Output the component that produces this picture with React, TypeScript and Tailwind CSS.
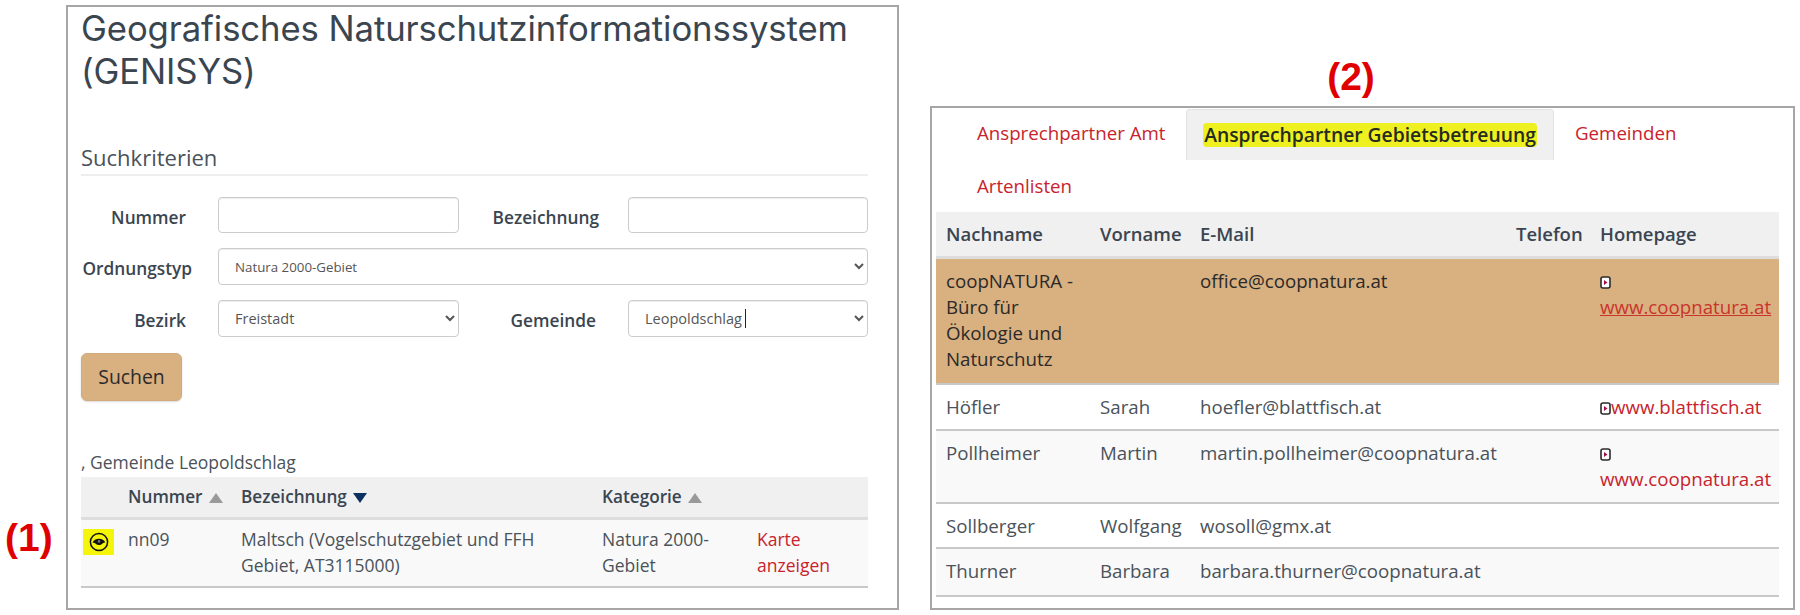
const FONT = "font-['Open_Sans',sans-serif]";

const CONTACTS = [
  { last: 'Höfler', first: 'Sarah', mail: 'hoefler@blattfisch.at', web: 'www.blattfisch.at', row: 'h-[46px] bg-white', inline: true },
  { last: 'Pollheimer', first: 'Martin', mail: 'martin.pollheimer@coopnatura.at', web: 'www.coopnatura.at', row: 'h-[73px] bg-[#f9f9f9]', inline: false },
  { last: 'Sollberger', first: 'Wolfgang', mail: 'wosoll@gmx.at', web: '', row: 'h-[45px] bg-white', inline: false },
  { last: 'Thurner', first: 'Barbara', mail: 'barbara.thurner@coopnatura.at', web: '', row: 'h-[48px] bg-[#f9f9f9]', inline: false },
];

function LinkIcon() {
  return (
    <svg width="11" height="13" viewBox="0 0 11 13" className="inline-block align-[-1px]">
      <rect x="1" y="1" width="9" height="11" rx="2" fill="#fff" stroke="#2b2b2b" strokeWidth="1.6" />
      <path d="M4 4 L7.5 6.5 L4 9 Z" fill="#a3104f" />
    </svg>
  );
}

function EyeIcon() {
  return (
    <svg width="20" height="20" viewBox="0 0 20 20">
      <circle cx="10" cy="10" r="8.6" fill="none" stroke="#111" strokeWidth="1.5" />
      <path d="M3.6 10.8 C5 5.6 14.4 5.2 16.4 10.6 C14 9.8 13.4 13 10 13 C7 13 6.2 10 3.6 10.8 Z" fill="#111" />
      <circle cx="10" cy="9.4" r="1.3" fill="#777" />
    </svg>
  );
}

function SortUp() {
  return <span className="ml-1.5 inline-block h-0 w-0 border-x-[7px] border-b-[10px] border-x-transparent border-b-[#999]" />;
}

function FormLabel({ children, className }: { children: string; className: string }) {
  return <label className={`shrink-0 pt-[5px] text-right text-[17.3px] font-semibold text-[#3a4550] ${className}`}>{children}</label>;
}

function Box({ className = '', value }: { className?: string; value: string }) {
  return (
    <select
      defaultValue={value}
      className={`h-[37px] rounded border border-[#ccc] bg-white pl-[12px] text-[#555] shadow-[inset_0_1px_1px_rgba(0,0,0,0.075)] ${className}`}
    >
      <option>{value}</option>
    </select>
  );
}

export default function App() {
  return (
    <div className={`flex h-[615px] w-[1800px] overflow-hidden bg-white text-[#4a525a] ${FONT}`}>
      <div className="w-[66px] shrink-0 pl-[5px] pt-[511px] font-['Liberation_Sans',sans-serif] text-[39px] font-bold leading-[54px] text-[#e00000]">
        (1)
      </div>

      <section className="mt-[5px] box-border h-[605px] w-[833px] shrink-0 border-2 border-[#a6a6a6] pl-[13px] pr-[29px]">
        <h1 className="font-['Inter',sans-serif] text-[34.7px] leading-[43px] font-normal tracking-[-0.1px] whitespace-nowrap text-[#3a4550]">
          Geografisches Naturschutzinformationssystem
          <br />
          (GENISYS)
        </h1>
        <h2 className="mt-[50px] border-b-2 border-[#eeeeee] pb-[3px] text-[22px] leading-[28px] text-[#4a525a]">Suchkriterien</h2>

        <form className="mt-[21px]">
          <div className="flex h-[36px] items-center">
            <FormLabel className="w-[137px] pr-[32px]">Nummer</FormLabel>
            <input className="box-border h-[36px] w-[241px] rounded border border-[#ccc] shadow-[inset_0_1px_1px_rgba(0,0,0,0.075)]" />
            <FormLabel className="w-[169px] pr-[29px]">Bezeichnung</FormLabel>
            <input className="box-border h-[36px] w-[240px] rounded border border-[#ccc] shadow-[inset_0_1px_1px_rgba(0,0,0,0.075)]" />
          </div>
          <div className="mt-[15px] flex items-center">
            <FormLabel className="w-[137px] pr-[26px]">Ordnungstyp</FormLabel>
            <Box className="w-[650px] text-[13.3px]" value="Natura 2000-Gebiet" />
          </div>
          <div className="mt-[15px] flex items-center">
            <FormLabel className="w-[137px] pr-[32px]">Bezirk</FormLabel>
            <Box className="w-[241px] text-[14.5px]" value="Freistadt" />
            <FormLabel className="w-[169px] pr-[32px]">Gemeinde</FormLabel>
            <div className="relative">
              <Box className="w-[240px] text-[14.5px]" value="Leopoldschlag" />
              <span className="absolute left-[117px] top-[9px] h-[19px] w-px bg-[#222]" />
            </div>
          </div>
          <button type="button" className="mt-[16px] block h-[48px] w-[101px] rounded-md border border-[#d3ab7b] bg-[#d9b07f] text-[19.4px] text-[#2b2b2b] shadow-[0_1px_2px_rgba(0,0,0,0.15)]">
            Suchen
          </button>
        </form>

        <p className="mt-[48px] text-[17.5px] leading-[26px]">, Gemeinde Leopoldschlag</p>

        <table className="mt-[2px] w-[787px] table-fixed border-collapse text-[17.5px] leading-[26px]">
          <colgroup>
            <col className="w-[37px]" />
            <col className="w-[113px]" />
            <col className="w-[361px]" />
            <col className="w-[155px]" />
            <col className="w-[121px]" />
          </colgroup>
          <thead>
            <tr className="h-[41px] border-b-[3px] border-[#dddddd] bg-[#f0f0f0] text-left text-[#3a4550]">
              <th />
              <th className="pl-[10px] text-[17.2px] font-semibold whitespace-nowrap">Nummer<SortUp /></th>
              <th className="pl-[10px] text-[17.2px] font-semibold whitespace-nowrap">
                Bezeichnung
                <span className="ml-1.5 inline-block h-0 w-0 border-x-[7px] border-t-[10px] border-x-transparent border-t-[#0b3160]" />
              </th>
              <th className="pl-[10px] text-[17.2px] font-semibold whitespace-nowrap">Kategorie<SortUp /></th>
              <th />
            </tr>
          </thead>
          <tbody>
            <tr className="border-b-2 border-[#c8c8c8] bg-[#f9f9f9] align-top">
              <td className="pl-[2px] pt-[9px]">
                <span className="flex h-[26px] w-[31px] items-center justify-center bg-[#f5f50a]"><EyeIcon /></span>
              </td>
              <td className="pl-[10px] pt-[6px]">nn09</td>
              <td className="px-[10px] pb-[8px] pt-[6px]">Maltsch (Vogelschutzgebiet und FFH Gebiet, AT3115000)</td>
              <td className="px-[10px] pt-[6px]">Natura 2000-Gebiet</td>
              <td className="px-[10px] pt-[6px] text-[#c8232c]">Karte anzeigen</td>
            </tr>
          </tbody>
        </table>
      </section>

      <div className="ml-[31px] w-[865px] shrink-0">
        <div className="pr-[23px] pt-[52px] text-center font-['Liberation_Sans',sans-serif] text-[39px] font-bold leading-[49px] text-[#e00000]">(2)</div>
        <section className="mt-[5px] box-border h-[504px] border-2 border-[#a6a6a6] pl-[4px] pr-[14px]">
          <nav className="flex flex-wrap pl-[21px] pt-[1px] text-[18.7px] leading-[26px] text-[#c8232c]">
            <a className="flex h-[51px] w-[229px] items-center pb-[3px] pl-[20px]">Ansprechpartner Amt</a>
            <a className="flex h-[51px] w-[368px] items-center justify-center rounded-t border border-b-0 border-[#e4e4e4] bg-[#f0f0f0] pb-[1px] font-semibold text-[#3a4550]">
              <span className="rounded-sm bg-[#eef01f] px-[1px] text-[19.3px] leading-[24px] whitespace-nowrap text-[#262b20]">Ansprechpartner Gebietsbetreuung</span>
            </a>
            <a className="flex h-[51px] items-center pb-[3px] pl-[21px]">Gemeinden</a>
            <a className="flex h-[52px] w-full items-center pl-[20px]">Artenlisten</a>
          </nav>

          <table className="w-[843px] table-fixed border-collapse text-[18.7px] leading-[26px]">
            <colgroup>
              <col className="w-[154px]" />
              <col className="w-[100px]" />
              <col className="w-[316px]" />
              <col className="w-[84px]" />
              <col className="w-[189px]" />
            </colgroup>
            <thead>
              <tr className="h-[45px] border-b-[3px] border-[#dddddd] bg-[#f0f0f0] text-left text-[#3a4550]">
                {['Nachname', 'Vorname', 'E-Mail', 'Telefon', 'Homepage'].map((h) => (
                  <th key={h} className="pl-[10px] text-[18.5px] font-semibold whitespace-nowrap">{h}</th>
                ))}
              </tr>
            </thead>
            <tbody>
              <tr className="border-b-2 border-[#c8c8c8] bg-[#d9b07f] align-top text-[#2a2a2a]">
                <td className="px-[10px] pb-[11px] pt-[9px]">coopNATURA - Büro für Ökologie und Naturschutz</td>
                <td />
                <td className="px-[10px] pt-[9px]">office@coopnatura.at</td>
                <td />
                <td className="pl-[10px] pt-[9px]">
                  <LinkIcon />
                  <a className="block text-[#c9352c] underline">www.coopnatura.at</a>
                </td>
              </tr>
              {CONTACTS.map((c) => (
                <tr key={c.last} className={`border-b-2 border-[#c8c8c8] align-top ${c.row}`}>
                  <td className="px-[10px] pt-[9px]">{c.last}</td>
                  <td className="pl-[10px] pt-[9px] whitespace-nowrap">{c.first}</td>
                  <td className="px-[10px] pt-[9px] whitespace-nowrap">{c.mail}</td>
                  <td />
                  <td className="pl-[10px] pt-[9px] whitespace-nowrap text-[#c8232c]">
                    {c.web && <LinkIcon />}
                    {c.web && <a className={c.inline ? 'inline' : 'block'}>{c.web}</a>}
                  </td>
                </tr>
              ))}
            </tbody>
          </table>
        </section>
      </div>
    </div>
  );
}
